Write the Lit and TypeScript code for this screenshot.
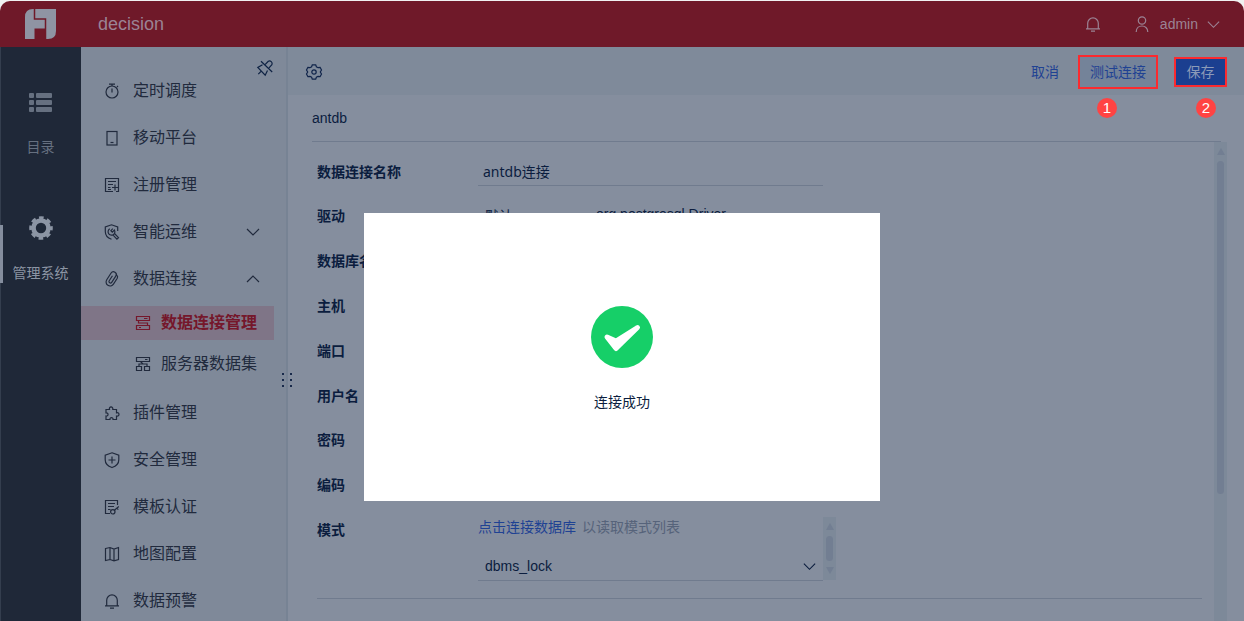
import { LitElement, html, css, svg, nothing } from "lit";
import { customElement, property, state } from "lit/decorators.js";
import { classMap } from "lit/directives/class-map.js";

const glyphs: Record<string, unknown> = {
  timer: svg`<circle cx="8" cy="9" r="6"/><path d="M8 5.5V9.5M5 1.2h6M8 1.2V3M13 3l1 1"/>`,
  phone: svg`<rect x="3" y="1.5" width="10" height="13.5"/><path d="M6.5 12.5h3"/>`,
  register: svg`<path d="M9 14.5H1.5V1.5h13v13H12M4 4.5h8M4 7.5h5M4 10.5h2.5M4 12.5h3M11 7.5v6M8 10.5h6"/>`,
  wrench: svg`<path d="M7.500 15.200C3.500 14 1.300 11.500 1.300 7.500V3L7.500.8 13.700 3v4"/><path d="M5.800 4.800a3.400 3.400 0 1 0 4.600 1.200L8.300 8.100 6.900 6.700 8.800 4.700M10.500 9.500l4 4.200-1.600 1.500-3.800-4"/>`,
  clip: svg`<path transform="rotate(33 8 8)" d="M12 6v5.500a4 4 0 0 1-8 0V3.500a2.800 2.800 0 0 1 5.600 0V11a1.500 1.500 0 0 1-3 0V5M9.600 2a2.800 2.800 0 0 1 2.400 2.500V8"/>`,
  rack: svg`<path d="M1.500 1.500h13v4h-13zM1.500 10.500h13v4h-13zM3.500 5.500V8h9v2.500M9 3.500h3.500M4 12.500h2"/>`,
  server: svg`<path d="M1.500 1.500h13v4h-13zM1.500 10.500h5v4h-5zM9.500 10.500h5v4h-5zM4 10.500V8h8v2.500M8 8L5.500 5.500M10 3.500h2.500"/>`,
  puzzle: svg`<path d="M2 4.500h3.500C4.500 1 9.500 1 8.800 4.500h3.700v3.300c3.300-.8 3.300 4 0 3.200v3.500H9c.5-2.500-3.500-2.500-3 0H2V11c2.700.3 2.700-3.500 0-3.200z"/>`,
  shield: svg`<path d="M8 .8l6.800 2.400v4.500c0 3.800-2.900 6.500-6.800 7.800C4.100 14.200 1.200 11.500 1.200 7.700V3.200zM8 4.500v7M4.500 8h7"/>`,
  cert: svg`<path d="M6 14.500H1.500v-13h12V6M4 4.500h7M4 7.500h6M4 10.500h2.500"/><circle cx="8.800" cy="12.800" r="2.200"/><path d="M10.400 11.200l4.400-3.700M12.800 9.200l1.500 1.500"/>`,
  map: svg`<path d="M1.500 2.500L6 1.500l4 1.500 4.500-1.500v12L10 14.800 6 13.500l-4.500 1zM6 1.500v12M10 3v11.800"/>`,
  bell: svg`<path d="M1 12.800h14M2.700 12.800V7.200a5.300 5.300 0 0 1 10.600 0v5.600M6 15.200h4"/>`,
  user: svg`<circle cx="8" cy="4.500" r="3.700"/><path d="M2.200 16c0-8 11.600-8 11.600 0"/>`,
  down: svg`<path d="M2 5l6 6 6-6"/>`,
  up: svg`<path d="M2 11l6-6 6 6"/>`,
  pin: svg`<path d="M5.500 4.800L.8 7.500l7.400 7.700L10.500 10.500M4 11.300L1.300 14.200M4 1.300L15.200 12M8.300 4.300l3-3c2-1.200 4.700 1 3.600 3.400L12 7.800"/>`,
  gear: svg`<path d="M6.300 .8h3.400l.7 2 1.600.9 2.100-.4 1.400 2.700-1.200 2 1.200 2-1.400 2.700-2.100-.4-1.600.9-.7 2H6.300l-.7-2-1.600-.9-2.100.4L.5 10l1.200-2L.5 6l1.400-2.700 2.100.4 1.600-.9z"/><circle cx="8" cy="8" r="2.200"/>`,
};

@customElement("ui-icon")
class UiIcon extends LitElement {
  @property() name = "";
  @property({ type: Number }) size = 16;

  static styles = css`
    :host { display: inline-flex; flex: none; }
    .glyph { fill: none; stroke: currentColor; stroke-width: 1.2; overflow: visible; }
  `;

  render() {
    return html`<svg class="glyph" width=${this.size} height=${this.size} viewBox="0 0 16 16" aria-hidden="true">${glyphs[this.name]}</svg>`;
  }
}

@customElement("scroll-rail")
class ScrollRail extends LitElement {
  @property({ type: Boolean }) end = false;

  static styles = css`
    :host { display: flex; flex-direction: column; align-items: center; width: 13px; padding: 6px 0; box-sizing: border-box; background: #7d8999; }
    .arrow { fill: #727e92; flex: none; }
    .thumb { width: 7px; border-radius: 4px; background: #727e92; margin: 6px 0; flex: 0 1 var(--thumb, 26px); }
    .flip { transform: rotate(180deg); }
  `;

  render() {
    return html`
      <svg class="arrow" width="8" height="7" viewBox="0 0 8 7"><path d="M4 0l4 7H0z"/></svg>
      <div class="thumb"></div>
      ${this.end ? html`<svg class="arrow flip" width="8" height="7" viewBox="0 0 8 7"><path d="M4 0l4 7H0z"/></svg>` : nothing}
    `;
  }
}

interface Item { icon: string; label: string; children?: Item[]; open?: boolean; active?: boolean }

const menu: Item[] = [
  { icon: "timer", label: "定时调度" },
  { icon: "phone", label: "移动平台" },
  { icon: "register", label: "注册管理" },
  { icon: "wrench", label: "智能运维", children: [] },
  {
    icon: "clip", label: "数据连接", open: true,
    children: [
      { icon: "rack", label: "数据连接管理", active: true },
      { icon: "server", label: "服务器数据集" },
    ],
  },
  { icon: "puzzle", label: "插件管理" },
  { icon: "shield", label: "安全管理" },
  { icon: "cert", label: "模板认证" },
  { icon: "map", label: "地图配置" },
  { icon: "bell", label: "数据预警" },
];

const fields = [
  { id: "db", label: "数据库名称", type: "text" },
  { id: "host", label: "主机", type: "text" },
  { id: "port", label: "端口", type: "text" },
  { id: "user", label: "用户名", type: "text", tight: true },
  { id: "pwd", label: "密码", type: "password" },
  { id: "enc", label: "编码", type: "text" },
];

@customElement("app-root")
class AppRoot extends LitElement {
  @state() private connectionName = "antdb连接";

  static styles = css`
    :host {
      display: flex; flex-direction: column; height: 100vh; overflow: hidden; box-sizing: border-box;
      padding-top: 1px; background: #f0f1f1; color: #0b1d3e;
      font: 14px/20px "Liberation Sans", "Noto Sans CJK SC", sans-serif;
    }
    * { box-sizing: border-box; }
    button, input, select { font: inherit; color: inherit; border: 0; border-radius: 0; background: none; padding: 0; margin: 0; }
    a { color: inherit; text-decoration: none; }

    .header { display: flex; align-items: center; flex: none; height: 46px; background: #6f1929; border-radius: 10px 10px 0 0; color: #9b8394; padding-right: 23px; }
    .logo { width: 81px; display: flex; justify-content: center; flex: none; }
    .brand { margin: 0 auto 0 17px; font-size: 18px; font-weight: 400; }
    .bell { display: flex; margin-right: 33px; }
    .account { display: flex; align-items: center; gap: 10px; }
    .account-arrow { margin-left: -2px; }

    .shell { display: flex; flex: 1; min-height: 0; }
    .rail { width: 81px; flex: none; background: #1f2838; box-shadow: inset 1px 0 #343e4e; display: flex; flex-direction: column; align-items: center; padding-top: 44px; gap: 59px; color: #667080; position: relative; }
    .rail-link { display: flex; flex-direction: column; align-items: center; gap: 23px; }
    .rail-link.current { color: #8c95a4; }
    .rail-mark { position: absolute; left: 0; top: 178px; width: 3px; height: 58px; background: #858e9e; }

    .side { width: 207px; flex: none; background: #7f8999; border-right: 2px solid #778394; padding-top: 20px; position: relative; color: #212a3d; }
    .pin { position: absolute; right: 13px; top: 13px; color: #0f2344; display: flex; }
    .grip { position: absolute; right: -6px; top: 326px; display: grid; grid-template-columns: 2px 2px; column-gap: 6px; row-gap: 4px; z-index: 1; }
    .dot { width: 2px; height: 2px; background: #18294a; }
    .entry { display: flex; align-items: center; height: 47px; width: 100%; padding: 0 25px 0 23px; gap: 13px; font-size: 16px; line-height: 24px; text-align: left; }
    .entry-text { flex: 1; }
    .subs { padding: 4px 12px 8px 0; display: flex; flex-direction: column; gap: 7px; }
    .sub { display: flex; align-items: center; gap: 10px; height: 34px; padding-left: 54px; font-size: 16px; line-height: 24px; }
    .sub.active { background: #7f7587; color: #75172b; font-weight: 700; }

    .main { flex: 1; min-width: 0; background: #858e9e; display: flex; flex-direction: column; }
    .toolbar { display: flex; align-items: center; height: 48px; flex: none; background: #7f8a9a; padding: 2px 17px 0 18px; }
    .tool { display: flex; margin-right: auto; color: #10244a; }
    .action { color: #1f4293; }
    .marked { position: relative; margin-left: 16px; display: flex; border: 2px solid #fb2a2f; }
    .test { width: 76px; height: 30px; background: #748399; }
    .save { width: 49px; height: 26px; background: #1b3f90; color: #8b9ab8; }
    .cancel { margin-right: 3px; }
    .step { position: absolute; width: 20px; height: 20px; border-radius: 50%; background: #ff4343; color: #fff; text-align: center; font-size: 15px; }
    .step.first { top: 41px; left: 17px; }
    .step.second { top: 39px; left: 20px; }

    .title { margin: 0 23px 0 24px; flex: none; height: 47px; line-height: 46px; border-bottom: 1px solid #707b8e; font-size: 14px; font-weight: 400; }
    .body { flex: 1; min-height: 0; display: flex; margin: 0 17px 0 29px; }
    .form { flex: 1; min-width: 0; padding-top: 16px; margin-right: 12px; overflow: hidden; }
    .form-row { display: grid; grid-template-columns: 161px minmax(0, 345px); height: 45px; line-height: 28px; }
    .form-row.tight { height: 44px; }
    .label { font-weight: 700; }
    .field { height: 28px; width: 100%; padding: 0 5px; border-bottom: 1px solid #707b8e; outline: 0; }
    .name { font-family: "Noto Sans", "Noto Sans CJK SC", sans-serif; }
    .driver { display: flex; gap: 10px; }
    .driver-kind { flex: 0 0 103px; appearance: none; padding: 0 7px; height: 24px; }
    .driver-class { flex: 1; min-width: 0; height: 24px; padding: 0 5px; }
    .mode { grid-template-columns: 161px minmax(0, 358px); height: 82px; }
    .mode-box { display: flex; height: 63px; margin-top: 1px; }
    .mode-list { flex: 1; min-width: 0; line-height: 20px; color: #56637a; }
    .hint { display: flex; gap: 6px; }
    .picker { position: relative; color: #0b1d3e; margin-top: 15px; display: flex; align-items: center; }
    .schema { appearance: none; width: 100%; height: 29px; padding: 0 7px; border-bottom: 1px solid #707b8e; outline: 0; }
    .picker-arrow { position: absolute; right: 6px; pointer-events: none; }
    .divider { border: 0; border-top: 1px solid #707b8e; margin: 0; }
    .page-scroll { --thumb: 333px; }

    .overlay { position: fixed; inset: 0; display: flex; align-items: center; justify-content: center; padding-top: 93px; z-index: 2; }
    .dialog { width: 516px; height: 288px; background: #fff; padding-top: 93px; display: flex; flex-direction: column; align-items: center; gap: 24px; }
    .message { margin: 0; }
  `;

  private entry(item: Item) {
    return html`
      <button class="entry" type="button">
        <ui-icon name=${item.icon}></ui-icon>
        <span class="entry-text">${item.label}</span>
        ${item.children ? html`<ui-icon name=${item.open ? "up" : "down"}></ui-icon>` : nothing}
      </button>
      ${item.open
        ? html`<div class="subs">${item.children!.map((c) => html`
            <a class=${classMap({ sub: true, active: !!c.active })} href="#">
              <ui-icon name=${c.icon}></ui-icon><span>${c.label}</span>
            </a>`)}</div>`
        : nothing}
    `;
  }

  render() {
    return html`
      <header class="header">
        <div class="logo">
          <svg width="31" height="30" viewBox="0 0 31 30" aria-hidden="true">
            <path d="M8 0h23v22Q31 30 23 30h-2.500V19.500H9.500V30H0V8Q0 0 8 0z" fill="#8f94a3"/>
            <path d="M9.500 0V10H20.500V30" fill="none" stroke="#6f1929" stroke-width="1.500"/>
          </svg>
        </div>
        <h1 class="brand">decision</h1>
        <button class="bell" type="button" aria-label="消息"><ui-icon name="bell"></ui-icon></button>
        <button class="account" type="button">
          <ui-icon name="user"></ui-icon><span>admin</span><ui-icon class="account-arrow" name="down" size="15"></ui-icon>
        </button>
      </header>

      <div class="shell">
        <nav class="rail">
          <a class="rail-link" href="#">
            <svg width="23" height="23" viewBox="0 0 23 23" fill="currentColor" aria-hidden="true">
              <rect y="2" width="5" height="5" rx="1"/><rect x="7" y="2" width="16" height="5" rx="1"/>
              <rect y="9" width="5" height="5" rx="1"/><rect x="7" y="9" width="16" height="5" rx="1"/>
              <rect y="16" width="5" height="5" rx="1"/><rect x="7" y="16" width="16" height="5" rx="1"/>
            </svg>
            <span>目录</span>
          </a>
          <a class="rail-link current" href="#">
            <svg width="24" height="24" viewBox="-12 -12 24 24" fill="none" stroke="currentColor" aria-hidden="true">
              <circle r="7.500" stroke-width="4.600"/>
              <circle r="10.300" stroke-width="3" stroke-dasharray="4.600 3.490" stroke-dashoffset="2.300"/>
            </svg>
            <span>管理系统</span>
          </a>
          <div class="rail-mark"></div>
        </nav>

        <aside class="side">
          <button class="pin" type="button" aria-label="固定"><ui-icon name="pin"></ui-icon></button>
          ${menu.map((m) => this.entry(m))}
          <div class="grip">${[0, 1, 2, 3, 4, 5].map(() => html`<i class="dot"></i>`)}</div>
        </aside>

        <main class="main">
          <div class="toolbar">
            <button class="tool" type="button" aria-label="设置"><ui-icon name="gear"></ui-icon></button>
            <button class="action cancel" type="button">取消</button>
            <div class="marked">
              <button class="action test" type="button">测试连接</button>
              <span class="step first">1</span>
            </div>
            <div class="marked">
              <button class="save" type="button">保存</button>
              <span class="step second">2</span>
            </div>
          </div>
          <h2 class="title">antdb</h2>
          <div class="body">
            <form class="form">
              <div class="form-row tight">
                <label class="label" for="name">数据连接名称</label>
                <input class="field name" id="name" .value=${this.connectionName}
                  @input=${(e: Event) => (this.connectionName = (e.target as HTMLInputElement).value)} />
              </div>
              <div class="form-row">
                <label class="label" for="driver">驱动</label>
                <div class="driver">
                  <select class="driver-kind" id="driver"><option>默认</option></select>
                  <input class="driver-class" aria-label="驱动类" value="org.postgresql.Driver" />
                </div>
              </div>
              ${fields.map((f) => html`
                <div class=${classMap({ "form-row": true, tight: !!f.tight })}>
                  <label class="label" for=${f.id}>${f.label}</label>
                  <input class="field" id=${f.id} type=${f.type} autocomplete="off" />
                </div>`)}
              <div class="form-row mode">
                <label class="label" for="schema">模式</label>
                <div class="mode-box">
                  <div class="mode-list">
                    <div class="hint"><a class="action" href="#">点击连接数据库</a><span>以读取模式列表</span></div>
                    <div class="picker">
                      <select class="schema" id="schema"><option>dbms_lock</option></select>
                      <ui-icon class="picker-arrow" name="down" size="15"></ui-icon>
                    </div>
                  </div>
                  <scroll-rail end></scroll-rail>
                </div>
              </div>
              <hr class="divider" />
            </form>
            <scroll-rail class="page-scroll"></scroll-rail>
          </div>
        </main>
      </div>

      <div class="overlay">
        <section class="dialog" role="dialog" aria-label="连接成功">
          <svg width="62" height="62" viewBox="0 0 62 62" aria-hidden="true">
            <circle cx="31" cy="31" r="31" fill="#16cf68"/>
            <path d="M16 31L25 42.500 46.500 21.500 25 35z" fill="#fff" stroke="#fff" stroke-width="5" stroke-linejoin="round"/>
          </svg>
          <p class="message">连接成功</p>
        </section>
      </div>
    `;
  }
}
